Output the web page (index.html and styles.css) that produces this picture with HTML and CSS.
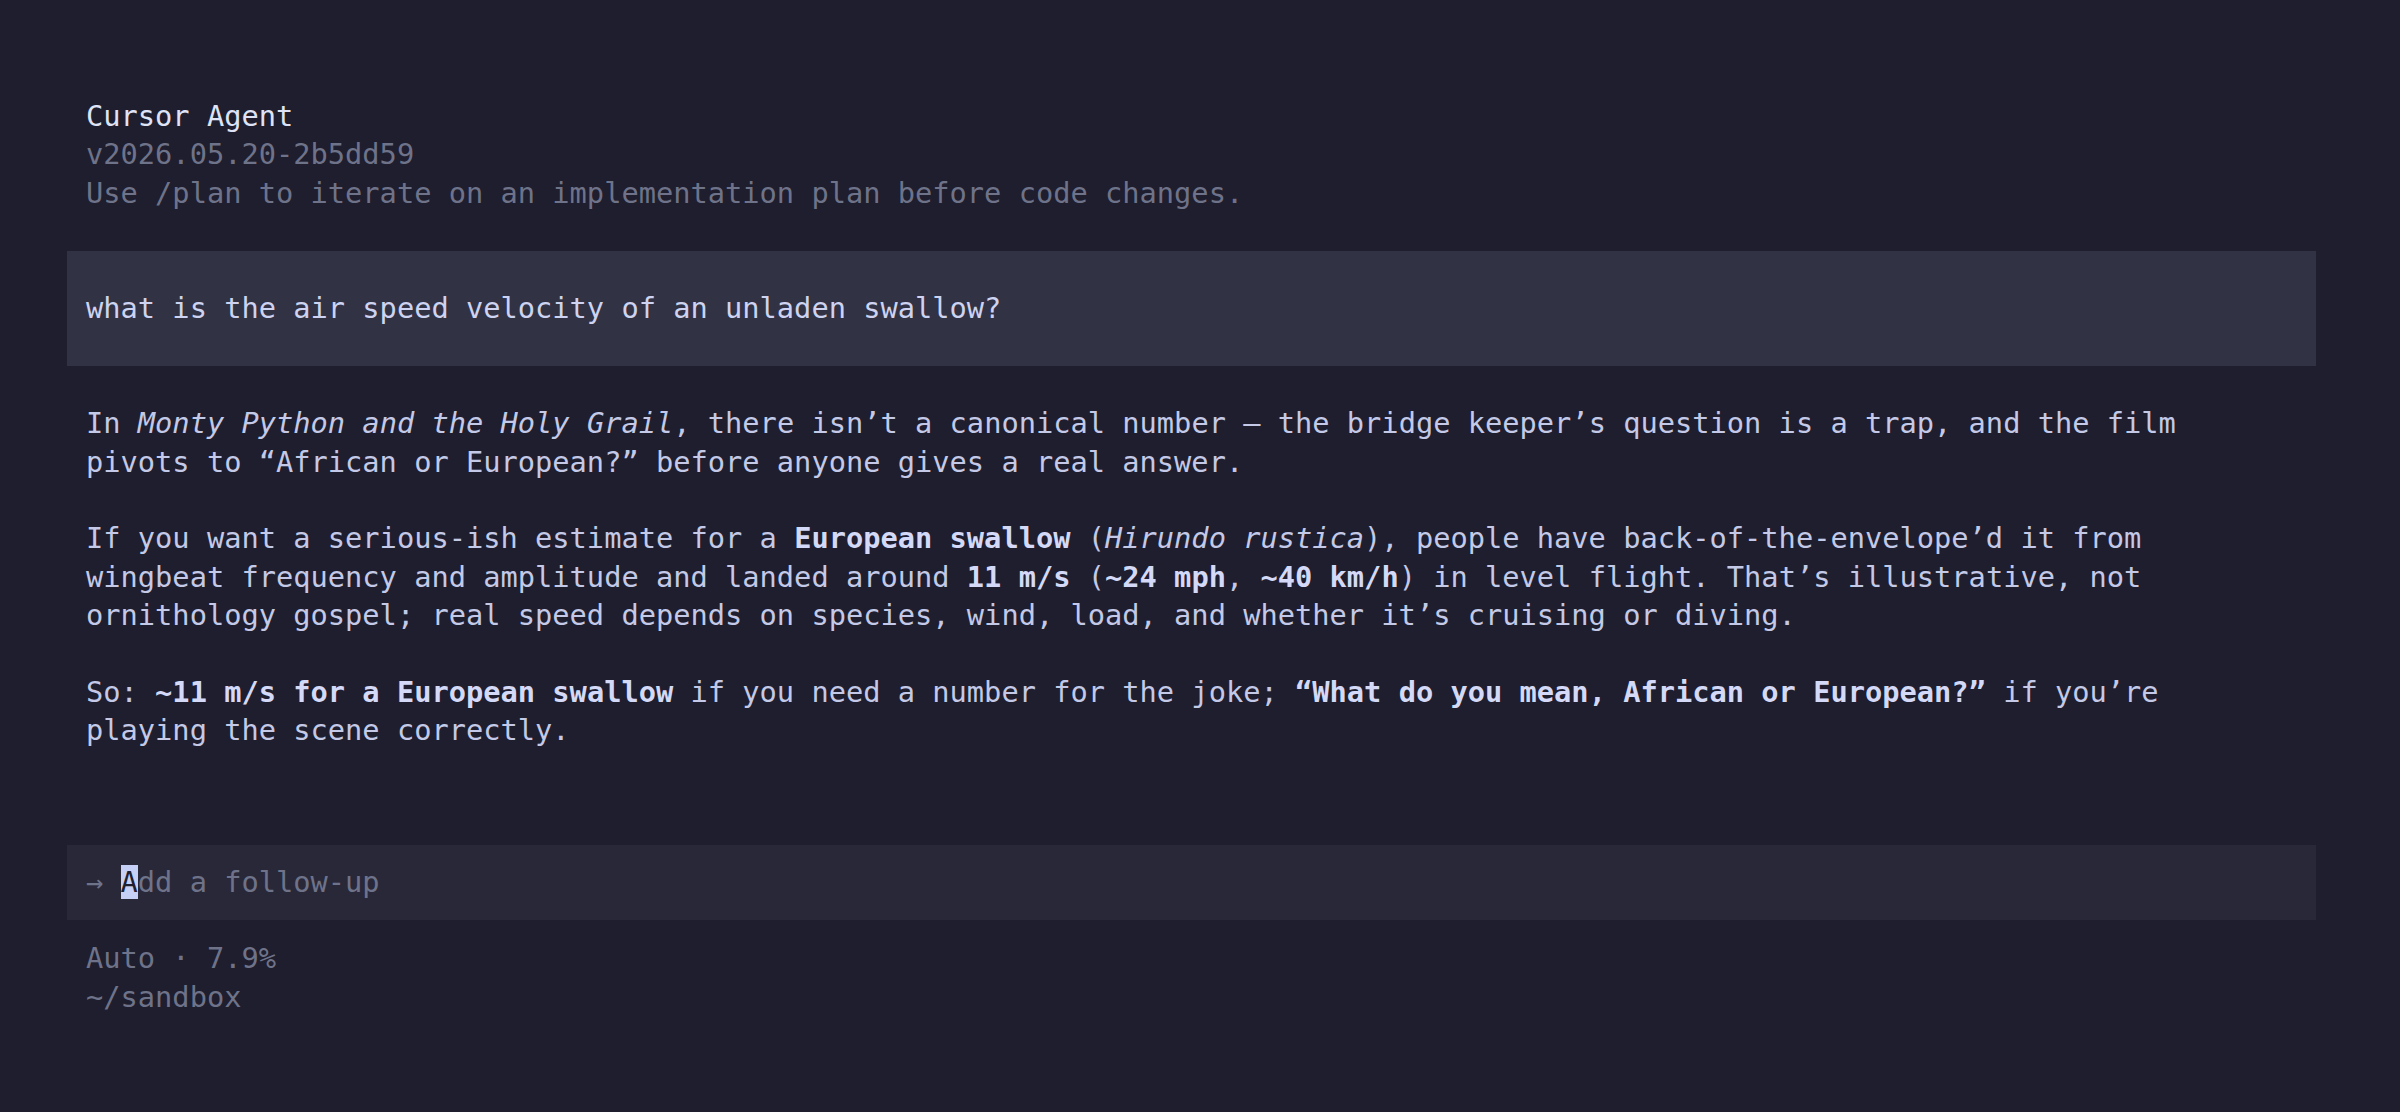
FILE: index.html
```html
<!DOCTYPE html>
<html lang="en">
<head>
<meta charset="utf-8">
<title>Cursor Agent</title>
<link rel="stylesheet" href="styles.css">
</head>
<body>
<div class="app">
  <header class="intro">
    <div class="title">Cursor Agent</div>
    <div class="muted">v2026.05.20-2b5dd59</div>
    <div class="muted">Use /plan to iterate on an implementation plan before code changes.</div>
  </header>

  <section class="prompt">
    <div class="prompt-text">what is the air speed velocity of an unladen swallow?</div>
  </section>

  <section class="response">
    <p>In <em>Monty Python and the Holy Grail</em>, there isn’t a canonical number — the bridge keeper’s question is a trap, and the film pivots to “African or European?” before anyone gives a real answer.</p>
    <p>If you want a serious-ish estimate for a <strong>European swallow</strong> (<em>Hirundo rustica</em>), people have back-of-the-envelope’d it from wingbeat frequency and amplitude and landed around <strong>11 m/s</strong> (<strong>~24 mph</strong>, <strong>~40 km/h</strong>) in level flight. That’s illustrative, not ornithology gospel; real speed depends on species, wind, load, and whether it’s cruising or diving.</p>
    <p>So: <strong>~11 m/s for a European swallow</strong> if you need a number for the joke; <strong>“What do you mean, African or European?”</strong> if you’re playing the scene correctly.</p>
  </section>

  <section class="followup">
    <div class="followup-line"><span class="arrow">→</span> <span class="caret">A</span><span class="placeholder">dd a follow-up</span></div>
  </section>

  <footer class="status">
    <div class="muted">Auto · 7.9%</div>
    <div class="muted">~/sandbox</div>
  </footer>
</div>
</body>
</html>
```

FILE: styles.css
```css
html, body {
  margin: 0;
  padding: 0;
  background: #1e1e2e;
}

body {
  font-family: "DejaVu Sans Mono", "Liberation Mono", monospace;
  font-size: 28.7px;
  line-height: 38.4px;
  color: #c3c9e6;
  height: 1112px;
  overflow: hidden;
}

.app {
  padding: 97px 84px 0 67px;
  display: flex;
  flex-direction: column;
}

.intro {
  padding-left: 19px;
}

.title {
  color: #dfe3f6;
}

.muted {
  color: #6f7389;
}

.prompt {
  margin-top: 38.4px;
  background: #313244;
  padding: 38.4px 19px;
}

.prompt-text {
  color: #cdd3f0;
  white-space: pre;
}

.response {
  margin-top: 38.4px;
  padding-left: 19px;
}

.response p {
  margin: 0 0 38.4px 0;
  max-width: 124ch;
}

.response p:last-child {
  margin-bottom: 0;
}

.response em {
  font-style: italic;
}

.response strong {
  font-weight: bold;
  color: #d3d9f6;
}

.followup {
  margin-top: 95px;
  background: #282839;
  padding: 18.5px 19px;
  color: #6f7389;
}

.followup-line {
  white-space: pre;
}

.arrow {
  color: #6f7389;
}

.caret {
  background: #c6cff6;
  color: #1e1e2e;
}

.placeholder {
  color: #6f7389;
}

.status {
  margin-top: 19px;
  padding-left: 19px;
}
```
